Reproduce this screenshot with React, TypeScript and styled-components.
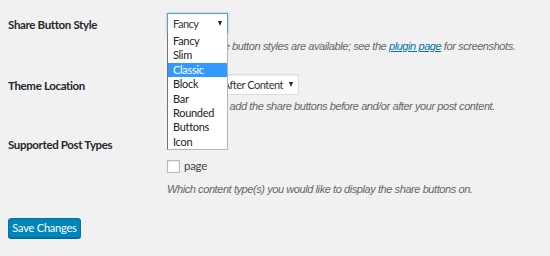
import React from 'react';
import styled, { createGlobalStyle } from 'styled-components';

const GlobalStyle = createGlobalStyle`
  html, body {
    margin: 0;
    padding: 0;
    background: #f1f1f1;
    font-family: Lato, "Open Sans", sans-serif;
    font-size: 11px;
    letter-spacing: -0.3px;
    color: #23282d;
  }
`;

const Page = styled.div`
  width: 550px;
  height: 256px;
  padding: 13px 8px 0;
  box-sizing: border-box;
  overflow: hidden;
`;

const FormRow = styled.div<{ $gap?: number }>`
  display: grid;
  grid-template-columns: 159px 1fr;
  margin-bottom: ${(p) => p.$gap ?? 20}px;
`;

const Label = styled.div<{ $offset?: number }>`
  font-weight: 700;
  font-size: 11.5px;
  letter-spacing: -0.35px;
  line-height: 16px;
  padding-top: ${(p) => p.$offset ?? 4}px;
`;

const Field = styled.div<{ $offset?: number }>`
  display: flex;
  flex-direction: column;
  align-items: flex-start;
  padding-top: ${(p) => p.$offset ?? 0}px;
`;

const SelectWrap = styled.div`
  position: relative;
`;

const Select = styled.div<{ $width: number; $focused?: boolean }>`
  position: relative;
  width: ${(p) => p.$width}px;
  height: 21px;
  box-sizing: border-box;
  background: #fff;
  border: 1px solid ${(p) => (p.$focused ? '#5b9dd9' : '#ddd')};
  box-shadow: ${(p) => (p.$focused ? '0 0 2px rgba(30,140,190,.5)' : 'inset 0 1px 2px rgba(0,0,0,.07)')};
  padding: 0 0 0 5px;
  font-size: 11px;
  letter-spacing: -0.5px;
  line-height: 19px;
  color: #32373c;
  white-space: nowrap;
`;

const Arrow = styled.span`
  position: absolute;
  right: 5px;
  top: 7px;
  width: 0;
  height: 0;
  border-left: 2.5px solid transparent;
  border-right: 2.5px solid transparent;
  border-top: 5px solid #222;
`;

const DropList = styled.ul`
  position: absolute;
  left: 0;
  top: 20px;
  z-index: 5;
  margin: 0;
  padding: 1px 0 0;
  list-style: none;
  width: 61px;
  box-sizing: border-box;
  background: #fff;
  border-left: 1px solid #767676;
  border-right: 1px solid #aab4cf;
  border-bottom: 1px solid #aab4cf;
`;

const Option = styled.li<{ $active?: boolean }>`
  height: 14.4px;
  line-height: 14.4px;
  padding-left: 5px;
  font-size: 11px;
  color: ${(p) => (p.$active ? '#fff' : '#222')};
  background: ${(p) => (p.$active ? '#3399ff' : 'transparent')};
`;

const Description = styled.p<{ $top?: number }>`
  margin: ${(p) => p.$top ?? 4}px 0 0;
  font-family: "Liberation Sans", Arial, sans-serif;
  font-style: italic;
  font-size: 11px;
  letter-spacing: -0.42px;
  line-height: 16px;
  color: #666;
  white-space: nowrap;
`;

const Link = styled.a`
  color: #0073aa;
  text-decoration: underline;
`;

const CheckLine = styled.label`
  display: flex;
  align-items: center;
  gap: 4px;
  font-size: 11.5px;
  line-height: 16px;
  color: #444;
`;

const Checkbox = styled.span`
  display: inline-block;
  width: 11px;
  height: 11px;
  background: #fff;
  border: 1px solid #b4b9be;
  box-shadow: inset 0 1px 2px rgba(0,0,0,.1);
`;

const SaveButton = styled.button`
  margin-top: 21px;
  height: 20px;
  width: 73px;
  padding: 0;
  background: #0085ba;
  border: 1px solid #0073aa;
  border-radius: 3px;
  box-shadow: 0 1px 0 #006799;
  color: #fff;
  font-family: Lato, "Open Sans", sans-serif;
  font-size: 11px;
  letter-spacing: -0.2px;
  line-height: 18px;
`;

const styles = ['Fancy', 'Slim', 'Classic', 'Block', 'Bar', 'Rounded', 'Buttons', 'Icon'];

export default function App() {
  return (
    <>
      <GlobalStyle />
      <Page>
        <FormRow>
          <Label>Share Button Style</Label>
          <Field>
            <SelectWrap>
              <Select $width={61} $focused>
                Fancy
                <Arrow />
              </Select>
              <DropList>
                {styles.map((s) => (
                  <Option key={s} $active={s === 'Classic'}>
                    {s}
                  </Option>
                ))}
              </DropList>
            </SelectWrap>
            <Description>
              Several share button styles are available; see the <Link>plugin page</Link> for screenshots.
            </Description>
          </Field>
        </FormRow>
        <FormRow>
          <Label>Theme Location</Label>
          <Field>
            <Select $width={132}>
              Before and After Content
              <Arrow />
            </Select>
            <Description $top={3}>
              Automatically add the share buttons before and/or after your post content.
            </Description>
          </Field>
        </FormRow>
        <FormRow $gap={0}>
          <Label $offset={3}>Supported Post Types</Label>
          <Field $offset={24}>
            <CheckLine>
              <Checkbox />
              page
            </CheckLine>
            <Description $top={7}>
              Which content type(s) you would like to display the share buttons on.
            </Description>
          </Field>
        </FormRow>
        <SaveButton>Save Changes</SaveButton>
      </Page>
    </>
  );
}
